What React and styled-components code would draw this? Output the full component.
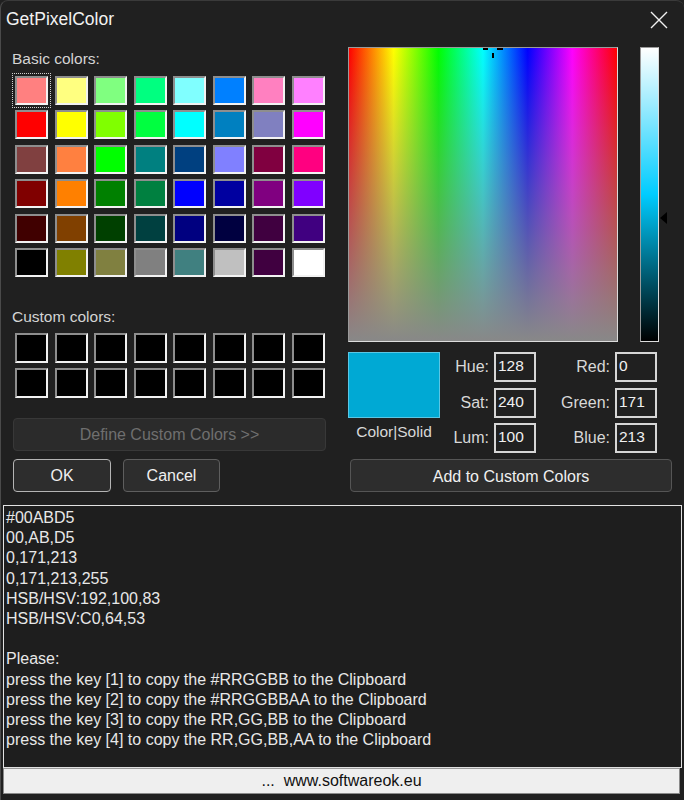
import React from "react";
import styled, { createGlobalStyle } from "styled-components";

const Global = createGlobalStyle`
  html, body { margin: 0; padding: 0; background: #202020; }
  body { font-family: "Liberation Sans", Arial, sans-serif; }
  * { box-sizing: border-box; }
`;

const Window = styled.div`
  width: 684px;
  height: 800px;
  background: #202020;
  display: flex;
  flex-direction: column;
  border-left: 1px solid #4a4a4a;
  border-top: 1px solid #3a3a3a;
  border-radius: 8px 8px 0 0;
  overflow: hidden;
`;

const TitleBar = styled.div`
  height: 37px;
  display: flex;
  align-items: center;
  justify-content: space-between;
  padding: 0 16px 0 5px;
  flex: none;
`;

const Title = styled.div`
  font-size: 17.5px;
  color: #f2f2f2;
`;

const Close = styled.svg`
  width: 18px;
  height: 18px;
  display: block;
`;

const Content = styled.div`
  display: flex;
  gap: 22px;
  padding: 0 11px 0 11px;
  height: 454px;
  flex: none;
`;

const Left = styled.div`
  width: 314px;
  padding-top: 12px;
  display: flex;
  flex-direction: column;
`;

const Label = styled.div`
  font-size: 15.5px;
  line-height: 18px;
  color: #d4d4d4;
  margin-top: ${(p) => p.$mt || 0}px;
`;

const SwatchGrid = styled.div`
  display: grid;
  grid-template-columns: repeat(8, 33px);
  grid-auto-rows: ${(p) => p.$rowH}px;
  column-gap: 6.57px;
  row-gap: ${(p) => p.$gap}px;
  padding-left: 3px;
  margin-top: ${(p) => p.$mt}px;
`;

const Swatch = styled.div`
  position: relative;
  background: ${(p) => p.$c};
  border: 2px solid;
  border-color: #8e8e8e #f2f2f2 #f2f2f2 #8e8e8e;
  ${(p) =>
    p.$focus &&
    `&::after {
      content: "";
      position: absolute;
      inset: -5px;
      border: 1px dotted #d0d0d0;
    }`}
`;

const Button = styled.button`
  height: 33px;
  width: ${(p) => p.$w};
  background: ${(p) => (p.$disabled ? "#2b2b2b" : "#2d2d2d")};
  border: 1px solid ${(p) => p.$border || "#4a4a4a"};
  border-radius: 4px;
  color: ${(p) => (p.$disabled ? "#6f6f6f" : "#f0f0f0")};
  font-family: "Liberation Sans", Arial, sans-serif;
  font-size: 16px;
  padding: 2px 0 0;
  margin-top: ${(p) => p.$mt || 0}px;
  margin-left: ${(p) => p.$ml || 0}px;
`;

const ButtonRow = styled.div`
  display: flex;
  gap: 12px;
  margin-top: 8px;
`;

const Right = styled.div`
  width: 324px;
  padding-top: 9px;
  display: flex;
  flex-direction: column;
`;

const SpectrumRow = styled.div`
  display: flex;
  align-items: flex-start;
`;

const Spectrum = styled.div`
  position: relative;
  width: 270px;
  height: 295px;
  border: 1px solid;
  border-color: #9a9a9a #dcdcdc #dcdcdc #9a9a9a;
  background: linear-gradient(to bottom, rgba(136, 136, 136, 0), #888888),
    linear-gradient(
      to right,
      #ff0000 0%,
      #ffff00 16.67%,
      #00ff00 33.33%,
      #00ffff 50%,
      #0000ff 66.67%,
      #ff00ff 83.33%,
      #ff0000 100%
    );
`;

const CrossBit = styled.div`
  position: absolute;
  background: #000;
  left: ${(p) => p.$x}px;
  top: ${(p) => p.$y}px;
  width: ${(p) => p.$w}px;
  height: ${(p) => p.$h}px;
`;

const LumBar = styled.div`
  position: relative;
  width: 19px;
  height: 295px;
  margin-left: 22px;
  border: 1px solid;
  border-color: #9a9a9a #dcdcdc #dcdcdc #9a9a9a;
  background: linear-gradient(to bottom, #ffffff 0%, #00ccff 50%, #000000 100%);
`;

const Arrow = styled.div`
  position: absolute;
  left: 19px;
  top: 164px;
  width: 0;
  height: 0;
  border-top: 6px solid transparent;
  border-bottom: 6px solid transparent;
  border-right: 7px solid #000;
`;

const Fields = styled.div`
  display: grid;
  grid-template-columns: 92px 54px 42px 79px 42px;
  grid-template-rows: repeat(3, 30px);
  row-gap: 5.5px;
  margin-top: 10px;
`;

const Preview = styled.div`
  grid-row: 1 / span 3;
  display: flex;
  flex-direction: column;
  align-items: center;
`;

const PreviewSwatch = styled.div`
  width: 92px;
  height: 66px;
  background: #00a9d4;
  border: 1px solid #5ac6e4;
`;

const Caption = styled.div`
  margin-top: 5px;
  font-size: 15.5px;
  line-height: 18px;
  color: #d8d8d8;
`;

const FieldLabel = styled.div`
  font-size: 16px;
  color: #d8d8d8;
  text-align: right;
  padding-right: 5px;
  line-height: 30px;
`;

const FieldBox = styled.div`
  border: 2px solid #d6d6d6;
  font-size: 15.5px;
  color: #f0f0f0;
  padding-left: 2px;
  line-height: 24px;
`;

const TextArea = styled.div`
  flex: none;
  height: 263px;
  margin: 13px 2px 0 2px;
  border: 1px solid #e2e2e2;
  background: #1e1e1e;
  padding: 2px 2px;
  color: #e8e8e8;
  font-size: 16px;
  line-height: 20.2px;
`;

const Line = styled.div`
  white-space: pre;
  height: 20.2px;
`;

const Footer = styled.div`
  flex: none;
  height: 26px;
  margin: 0 4px 0 2px;
  background: #efefef;
  border: 1px solid #8a8a8a;
  border-top-color: #9a9a9a;
  display: flex;
  align-items: center;
  justify-content: center;
  font-size: 16px;
  color: #111;
  white-space: pre;
`;

const basic = [
  ["#FF8080", "#FFFF80", "#80FF80", "#00FF80", "#80FFFF", "#0080FF", "#FF80C0", "#FF80FF"],
  ["#FF0000", "#FFFF00", "#80FF00", "#00FF40", "#00FFFF", "#0080C0", "#8080C0", "#FF00FF"],
  ["#804040", "#FF8040", "#00FF00", "#008080", "#004080", "#8080FF", "#800040", "#FF0080"],
  ["#800000", "#FF8000", "#008000", "#008040", "#0000FF", "#0000A0", "#800080", "#8000FF"],
  ["#400000", "#804000", "#004000", "#004040", "#000080", "#000040", "#400040", "#400080"],
  ["#000000", "#808000", "#808040", "#808080", "#408080", "#C0C0C0", "#400040", "#FFFFFF"],
].flat();

const lines = [
  "#00ABD5",
  "00,AB,D5",
  "0,171,213",
  "0,171,213,255",
  "HSB/HSV:192,100,83",
  "HSB/HSV:C0,64,53",
  "",
  "Please:",
  "press the key [1] to copy the #RRGGBB to the Clipboard",
  "press the key [2] to copy the #RRGGBBAA to the Clipboard",
  "press the key [3] to copy the RR,GG,BB to the Clipboard",
  "press the key [4] to copy the RR,GG,BB,AA to the Clipboard",
];

export default function App() {
  return (
    <>
      <Global />
      <Window>
        <TitleBar>
          <Title>GetPixelColor</Title>
          <Close viewBox="0 0 18 18">
            <path d="M1 1 L17 17 M17 1 L1 17" stroke="#f0f0f0" strokeWidth="1.4" fill="none" />
          </Close>
        </TitleBar>
        <Content>
          <Left>
            <Label>Basic colors:</Label>
            <SwatchGrid $rowH={29} $gap={5.4} $mt={8}>
              {basic.map((c, i) => (
                <Swatch key={i} $c={c} $focus={i === 0} />
              ))}
            </SwatchGrid>
            <Label $mt={31}>Custom colors:</Label>
            <SwatchGrid $rowH={30} $gap={5} $mt={7}>
              {Array.from({ length: 16 }).map((_, i) => (
                <Swatch key={i} $c="#000" />
              ))}
            </SwatchGrid>
            <Button $w="313px" $disabled $border="#383838" $mt={20} $ml={1}>
              Define Custom Colors &gt;&gt;
            </Button>
            <ButtonRow>
              <Button $w="98px" $border="#b4b4b4" $ml={1}>OK</Button>
              <Button $w="97px" $border="#5e5e5e">Cancel</Button>
            </ButtonRow>
          </Left>
          <Right>
            <SpectrumRow>
              <Spectrum>
                <CrossBit $x={134} $y={0} $w={5} $h={2} />
                <CrossBit $x={148} $y={0} $w={6} $h={2} />
                <CrossBit $x={143} $y={5} $w={2} $h={5} />
              </Spectrum>
              <LumBar>
                <Arrow />
              </LumBar>
            </SpectrumRow>
            <Fields>
              <Preview>
                <PreviewSwatch />
                <Caption>Color|Solid</Caption>
              </Preview>
              <FieldLabel>Hue:</FieldLabel>
              <FieldBox>128</FieldBox>
              <FieldLabel>Red:</FieldLabel>
              <FieldBox>0</FieldBox>
              <FieldLabel>Sat:</FieldLabel>
              <FieldBox>240</FieldBox>
              <FieldLabel>Green:</FieldLabel>
              <FieldBox>171</FieldBox>
              <FieldLabel>Lum:</FieldLabel>
              <FieldBox>100</FieldBox>
              <FieldLabel>Blue:</FieldLabel>
              <FieldBox>213</FieldBox>
            </Fields>
            <Button $w="322px" $border="#555" $mt={6} $ml={2}>
              Add to Custom Colors
            </Button>
          </Right>
        </Content>
        <TextArea>
          {lines.map((l, i) => (
            <Line key={i}>{l}</Line>
          ))}
        </TextArea>
        <Footer>{"...  www.softwareok.eu"}</Footer>
      </Window>
    </>
  );
}
